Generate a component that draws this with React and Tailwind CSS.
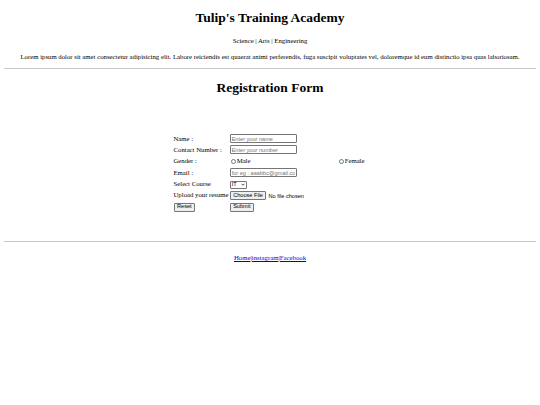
export default function App() {
  const serif = { fontFamily: '"Liberation Serif", "Times New Roman", serif' };
  const inputCls =
    "w-[67px] h-[9px] border-[0.5px] border-[#767676] rounded-[1px] px-[1px] text-[5.6px] leading-none text-black placeholder:text-[#757575] outline-none bg-white";
  const btnCls =
    "h-[9px] px-[2.5px] border-[0.5px] border-[#767676] rounded-[1px] bg-[#efefef] text-[5.6px] leading-none text-black";
  const sans = { fontFamily: '"Liberation Sans", Arial, sans-serif' };
  const row = "h-[11.33px]";

  return (
    <div className="w-[540px] h-[405px] bg-white text-black px-[4px]" style={serif}>
      <h1 className="text-center font-bold text-[13.5px] leading-[15px] pt-[10px]">
        Tulip's Training Academy
      </h1>
      <p className="text-center text-[6.75px] leading-[8px] mt-[12px]">
        Science | Arts | Engineering
      </p>
      <p className="text-center text-[6.75px] leading-[8px] mt-[8px]">
        Lorem ipsum dolor sit amet consectetur adipisicing elit. Labore reiciendis est quaerat animi
        perferendis, fuga suscipit voluptates vel, doloremque id eum distinctio ipsa quas laboriosam.
      </p>
      <hr className="mt-[7px] border-t-[1px] border-[#c8c8c8]" />
      <h1 className="text-center font-bold text-[13.5px] leading-[15px] mt-[11px]">
        Registration Form
      </h1>

      <form className="mt-[38px] flex justify-center">
        <table className="text-[6.75px] border-separate border-spacing-0 -ml-[2px]">
          <tbody>
            <tr className={row}>
              <td className="pr-[1px]">Name :</td>
              <td>
                <input className={inputCls} style={sans} placeholder="Enter your name" />
              </td>
              <td></td>
            </tr>
            <tr className={row}>
              <td className="pr-[1px]">Contact Number :</td>
              <td>
                <input className={inputCls} style={sans} placeholder="Enter your number" />
              </td>
              <td></td>
            </tr>
            <tr className={row}>
              <td>Gender :</td>
              <td className="w-[109px]">
                <span className="inline-flex items-center gap-[1px] ml-[1px]">
                  <span className="w-[5px] h-[5px] rounded-full border-[0.5px] border-[#767676] inline-block" />
                  Male
                </span>
              </td>
              <td>
                <span className="inline-flex items-center gap-[1px]">
                  <span className="w-[5px] h-[5px] rounded-full border-[0.5px] border-[#767676] inline-block" />
                  Female
                </span>
              </td>
            </tr>
            <tr className={row}>
              <td>Email :</td>
              <td>
                <input className={inputCls} style={sans} placeholder="for eg : aaabbc@gmail.com" />
              </td>
              <td></td>
            </tr>
            <tr className={row}>
              <td>Select Course</td>
              <td>
                <span
                  className="inline-flex items-center justify-between w-[17px] h-[8px] border-[0.5px] border-[#767676] rounded-[1px] px-[1px] text-[5.6px] leading-none"
                  style={sans}
                >
                  IT
                  <svg width="4" height="3" viewBox="0 0 8 5">
                    <path d="M1 1l3 3 3-3" fill="none" stroke="#000" strokeWidth="1.4" />
                  </svg>
                </span>
              </td>
              <td></td>
            </tr>
            <tr className={row}>
              <td className="whitespace-nowrap pr-[1px]">Upload your resume</td>
              <td className="whitespace-nowrap">
                <span className="inline-flex items-center gap-[2px]" style={sans}>
                  <button type="button" className={btnCls} style={sans}>
                    Choose File
                  </button>
                  <span className="text-[5.6px]">No file chosen</span>
                </span>
              </td>
              <td></td>
            </tr>
            <tr className={row}>
              <td>
                <button type="reset" className={btnCls} style={sans}>
                  Reset
                </button>
              </td>
              <td>
                <button type="button" className={btnCls} style={sans}>
                  Submit
                </button>
              </td>
              <td></td>
            </tr>
          </tbody>
        </table>
      </form>

      <hr className="mt-[29px] border-t-[1px] border-[#c8c8c8]" />
      <p className="text-center text-[6.75px] leading-[8px] mt-[12px]">
        <a href="#" className="text-[#0000ee] underline">Home</a>
        <span>|</span>
        <a href="#" className="text-[#0000ee] underline">instagram</a>
        <span>|</span>
        <a href="#" className="text-[#0000ee] underline">Facebook</a>
      </p>
    </div>
  );
}
